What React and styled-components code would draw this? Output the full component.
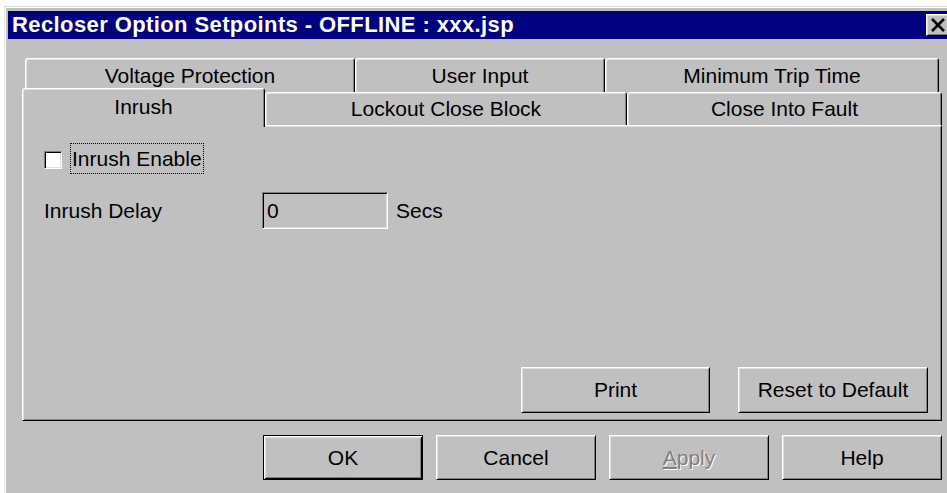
import React from "react";
import styled, { createGlobalStyle, css } from "styled-components";

const GlobalStyle = createGlobalStyle`
  html, body {
    margin: 0;
    background: #fff;
    overflow: hidden;
  }
  body {
    font-family: "Liberation Sans", Arial, sans-serif;
    font-size: 21px;
    color: #000;
  }
`;

// classic 3D edges
const raised = css`
  border: 1px solid;
  border-color: #fff #000 #000 #fff;
  box-shadow: inset 1px 1px #dfdfdf, inset -1px -1px #808080;
`;

const sunken = css`
  border: 1px solid;
  border-color: #808080 #fff #fff #808080;
  box-shadow: inset 1px 1px #000, inset -1px -1px #dfdfdf;
`;

const Window = styled.div`
  box-sizing: border-box;
  width: 960px;
  height: 500px;
  margin: 6px 0 0 4px;
  padding: 4px 0 0 3px;
  background: #c0c0c0;
  border-top: 1px solid #dfdfdf;
  border-left: 1px solid #dfdfdf;
  box-shadow: inset 1px 1px #fff;
`;

const TitleBar = styled.div`
  box-sizing: border-box;
  width: 946px;
  height: 28px;
  display: flex;
  align-items: center;
  justify-content: space-between;
  padding: 0 4px;
  background: #000080;
  color: #fff;
  font-weight: bold;
  font-size: 22px;
  letter-spacing: 0.4px;
  white-space: nowrap;
`;

const CloseBox = styled.div`
  box-sizing: border-box;
  width: 24px;
  height: 22px;
  background: #c0c0c0;
  display: flex;
  align-items: center;
  justify-content: center;
  ${raised}
`;

const Body = styled.div`
  box-sizing: border-box;
  width: 946px;
  padding: 19px 12px 0 14px;
`;

const TabRow = styled.div`
  display: flex;
  align-items: flex-end;
  height: ${(p) => p.$h}px;
  padding-left: ${(p) => p.$indent || 0}px;
`;

const Tab = styled.div`
  box-sizing: border-box;
  flex: none;
  width: ${(p) => p.$w}px;
  height: ${(p) => p.$h}px;
  display: flex;
  align-items: center;
  justify-content: center;
  background: #c0c0c0;
  border: 1px solid;
  border-bottom: none;
  border-color: #fff #000 transparent #fff;
  border-radius: 3px 3px 0 0;
  box-shadow: inset 1px 1px #dfdfdf, inset -1px 0 #808080;
  white-space: nowrap;
  ${(p) =>
    p.$active &&
    css`
      position: relative;
      z-index: 1;
      margin-bottom: -2px;
      padding-bottom: 2px;
    `}
`;

const Panel = styled.div`
  box-sizing: border-box;
  height: 296px;
  display: flex;
  flex-direction: column;
  padding: 17px 13px 7px 21px;
  ${raised}
`;

const CheckRow = styled.div`
  display: flex;
  align-items: center;
  gap: 8px;
`;

const CheckBox = styled.span`
  box-sizing: border-box;
  width: 18px;
  height: 18px;
  margin-top: 2px;
  background: #fff;
  ${sunken}
`;

const FocusLabel = styled.span`
  border: 1px dotted #000;
  padding: 0 1px;
  line-height: 29px;
`;

const FieldRow = styled.div`
  display: flex;
  align-items: center;
  margin-top: 18px;
`;

const FieldLabel = styled.span`
  width: 218px;
`;

const TextBox = styled.div`
  box-sizing: border-box;
  width: 126px;
  height: 37px;
  display: flex;
  align-items: center;
  padding-left: 4px;
  background: #c0c0c0;
  ${sunken}
`;

const Unit = styled.span`
  margin-left: 8px;
`;

const ButtonRow = styled.div`
  display: flex;
  justify-content: flex-end;
  gap: ${(p) => p.$gap}px;
  margin-top: ${(p) => (p.$top ? `${p.$top}px` : "auto")};
`;

const PushButton = styled.button`
  box-sizing: border-box;
  width: ${(p) => p.$w}px;
  height: ${(p) => p.$h}px;
  padding: 0;
  font: inherit;
  color: #000;
  background: #c0c0c0;
  ${raised}
  ${(p) =>
    p.$default &&
    css`
      border-color: #000;
      box-shadow: inset 1px 1px #fff, inset -1px -1px #000,
        inset 2px 2px #dfdfdf, inset -2px -2px #808080;
    `}
  &:disabled {
    color: #808080;
    text-shadow: 1px 1px #fff;
  }
`;

const CloseGlyph = () => (
  <svg width="16" height="14" viewBox="0 0 16 14">
    <path d="M2 1 L14 13 M14 1 L2 13" stroke="#000" strokeWidth="2.6" />
  </svg>
);

const backTabs = [
  { label: "Voltage Protection", w: 330 },
  { label: "User Input", w: 250 },
  { label: "Minimum Trip Time", w: 334 },
];

const frontTabs = [
  { label: "Inrush", w: 243, active: true },
  { label: "Lockout Close Block", w: 362 },
  { label: "Close Into Fault", w: 315 },
];

export default function App() {
  return (
    <>
      <GlobalStyle />
      <Window>
        <TitleBar>
          <span>Recloser Option Setpoints - OFFLINE : xxx.jsp</span>
          <CloseBox>
            <CloseGlyph />
          </CloseBox>
        </TitleBar>
        <Body>
          <TabRow $h={34} $indent={3}>
            {backTabs.map((t) => (
              <Tab key={t.label} $w={t.w} $h={34}>
                {t.label}
              </Tab>
            ))}
          </TabRow>
          <TabRow $h={33}>
            {frontTabs.map((t) => (
              <Tab key={t.label} $w={t.w} $h={t.active ? 39 : 33} $active={t.active}>
                {t.label}
              </Tab>
            ))}
          </TabRow>
          <Panel>
            <CheckRow>
              <CheckBox />
              <FocusLabel>Inrush Enable</FocusLabel>
            </CheckRow>
            <FieldRow>
              <FieldLabel>Inrush Delay</FieldLabel>
              <TextBox>0</TextBox>
              <Unit>Secs</Unit>
            </FieldRow>
            <ButtonRow $gap={28}>
              <PushButton $w={189} $h={46}>Print</PushButton>
              <PushButton $w={190} $h={46}>Reset to Default</PushButton>
            </ButtonRow>
          </Panel>
          <ButtonRow $gap={13} $top={14}>
            <PushButton $w={160} $h={45} $default>OK</PushButton>
            <PushButton $w={160} $h={45}>Cancel</PushButton>
            <PushButton $w={160} $h={45} disabled>
              <u>A</u>pply
            </PushButton>
            <PushButton $w={160} $h={45}>Help</PushButton>
          </ButtonRow>
        </Body>
      </Window>
    </>
  );
}
